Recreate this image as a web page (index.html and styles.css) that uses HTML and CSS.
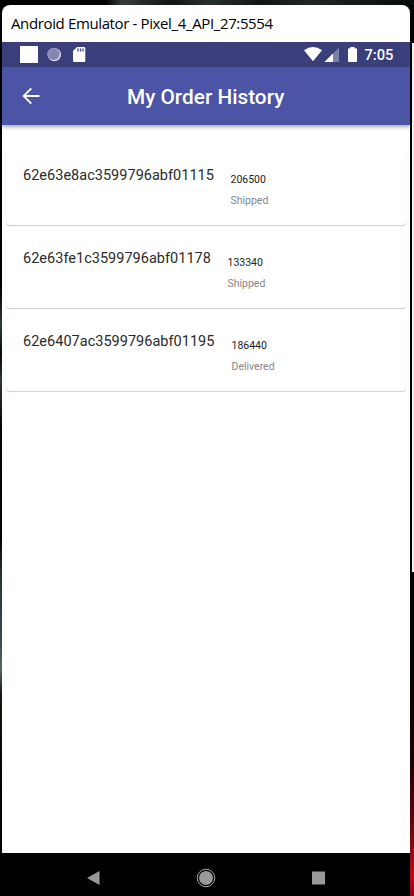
FILE: index.html
```
<!DOCTYPE html>
<html lang="en">
<head>
<meta charset="utf-8">
<title>My Order History</title>
<link rel="stylesheet" href="styles.css">
</head>
<body>
<div class="desktop">
  <div class="edge-left"></div>
  <main class="window">
    <div class="titlebar"><span>Android Emulator - Pixel_4_API_27:5554</span></div>
    <div class="statusbar">
      <svg width="408" height="25" viewBox="2 42 408 25">
        <path d="M20 46h18v17H20z" fill="#fff"/>
        <circle cx="54.300" cy="54.600" r="6.700" fill="#e4e4ee"/>
        <circle cx="53.600" cy="54" r="6.200" fill="#8487af"/>
        <circle cx="53.600" cy="54" r="5.600" fill="none" stroke="#b1b3ce" stroke-dasharray="1 1.5"/>
        <path d="M77 47h7a1.300 1.300 0 0 1 1.300 1.300v12.400A1.300 1.300 0 0 1 84 62h-9.700a1.300 1.300 0 0 1-1.300-1.300V51z" fill="#fff"/>
        <path d="M78 48.500v3M80.500 48.500v3M83 48.500v3" stroke="#3a3f7c" stroke-width="1.300"/>
        <path d="M304 50.300Q313 43.700 322 50.300L313 61.300z" fill="#fff"/>
        <path d="M339 47.500V62h-14.500z" fill="#7c7fa9"/>
        <path d="M333 53.500V62h-8.500z" fill="#fff"/>
        <path d="M350.300 47h4.400v1.200h1.300a1 1 0 0 1 1 1V61a1 1 0 0 1-1 1h-7a1 1 0 0 1-1-1V49.200a1 1 0 0 1 1-1h1.300z" fill="#fff"/>
      </svg>
      <span class="clock">7:05</span>
    </div>
    <header class="appbar">
      <svg class="back" width="18" height="18" viewBox="0 0 18 18" fill="none" stroke="#fff" stroke-width="1.800"><path d="M17.500 9H2M9.300 1.300L1.600 9l7.700 7.700"/></svg>
      <h1>My Order History</h1>
    </header>
    <section class="orders">
      <article class="card"><span class="order-id id-1">62e63e8ac3599796abf01115</span><div class="detail"><p class="price">206500</p><p class="state">Shipped</p></div></article>
      <article class="card"><span class="order-id id-2">62e63fe1c3599796abf01178</span><div class="detail"><p class="price">133340</p><p class="state">Shipped</p></div></article>
      <article class="card"><span class="order-id id-3">62e6407ac3599796abf01195</span><div class="detail"><p class="price">186440</p><p class="state">Delivered</p></div></article>
    </section>
    <nav class="navbar">
      <svg width="408" height="43" viewBox="2 853 408 43">
        <path d="M87 878l12.500-7v14z" fill="#999"/>
        <circle cx="206" cy="878" r="8.800" fill="none" stroke="#aaa" stroke-width="1"/>
        <circle cx="206" cy="878" r="7" fill="#999"/>
        <path d="M312 871.500h13v13h-13z" fill="#999"/>
      </svg>
    </nav>
  </main>
  <div class="edge-right"><div class="neighbor"></div></div>
</div>
</body>
</html>
```
FILE: styles.css
```
* { box-sizing: border-box; margin: 0; padding: 0; }
body { width: 414px; height: 896px; overflow: hidden; background: #000; font-family: Roboto, sans-serif; }
svg { display: block; }
.desktop {
  display: grid;
  grid-template-columns: 2px 408px 4px;
  height: 896px;
  padding-top: 5px;
  background: linear-gradient(90deg, #000 105px, #363e3c 122px, #111616 170px, #293030 210px, #101414 260px, #202625 310px, #080b0b 414px) top / 100% 43px no-repeat #000;
}
.edge-left { background: linear-gradient(#000 280px, #30393a 320px, #080a0a 350px, #303838 375px, #050606 420px, #000 530px, #293134 570px, #38474b 630px, #596365 665px, #17130f 690px, #000 800px); }
.edge-right { padding: 38px 0 0 2px; background: linear-gradient(90deg, #000 50%, transparent 50%) top / 100% 567px no-repeat, linear-gradient(#000 38px, #000 640px, #200003 760px, #65070d 820px, #b50d18 870px, #850810 891px); }
.neighbor { height: 529px; background: #f0f0f0; }
.window { display: flex; flex-direction: column; height: 891px; overflow: hidden; border-radius: 8px 8px 0 0; background: #fff; }
.titlebar { height: 37px; padding-left: 9px; font: 15px/37px "Open Sans", sans-serif; color: #000; white-space: nowrap; }
.titlebar span { display: inline-block; letter-spacing: -0.370px; }
.statusbar { display: flex; height: 25px; background: #3a3f7c; color: #fff; }
.clock { margin-left: -45.500px; font-size: 14.700px; line-height: 26px; font-weight: 500; white-space: nowrap; }
.appbar { z-index: 1; display: flex; align-items: center; height: 58px; flex: none; padding-left: 20px; background: #4c54a5; box-shadow: 0 2px 4px rgba(0, 0, 0, .35); clip-path: inset(0 0 -8px 0); color: #fff; }
.appbar h1 { margin-left: 87px; padding-top: 2px; font-size: 20.800px; line-height: 24px; font-weight: 500; white-space: nowrap; }
.orders { display: flex; flex: 1; flex-direction: column; gap: 8px; padding: 25px 4px 0; }
.card { display: flex; height: 75px; padding: 16px 17px; border-radius: 4px; background: #fff; box-shadow: 0 1px 1px rgba(0, 0, 0, .2), 0 0 1px rgba(0, 0, 0, .06); }
.order-id { padding-top: 1px; font-size: 14.500px; letter-spacing: 0.020px; line-height: 18px; color: #2a2a2a; white-space: nowrap; }
.id-1 { width: 207.500px; }
.id-2 { width: 204.500px; }
.id-3 { width: 208.500px; }
.detail { padding-top: 6px; font-size: 10.500px; line-height: 15px; }
.price { color: #212121; }
.state { margin-top: 6px; color: #868686; }
.navbar { height: 43px; flex: none; background: #000; }
```
